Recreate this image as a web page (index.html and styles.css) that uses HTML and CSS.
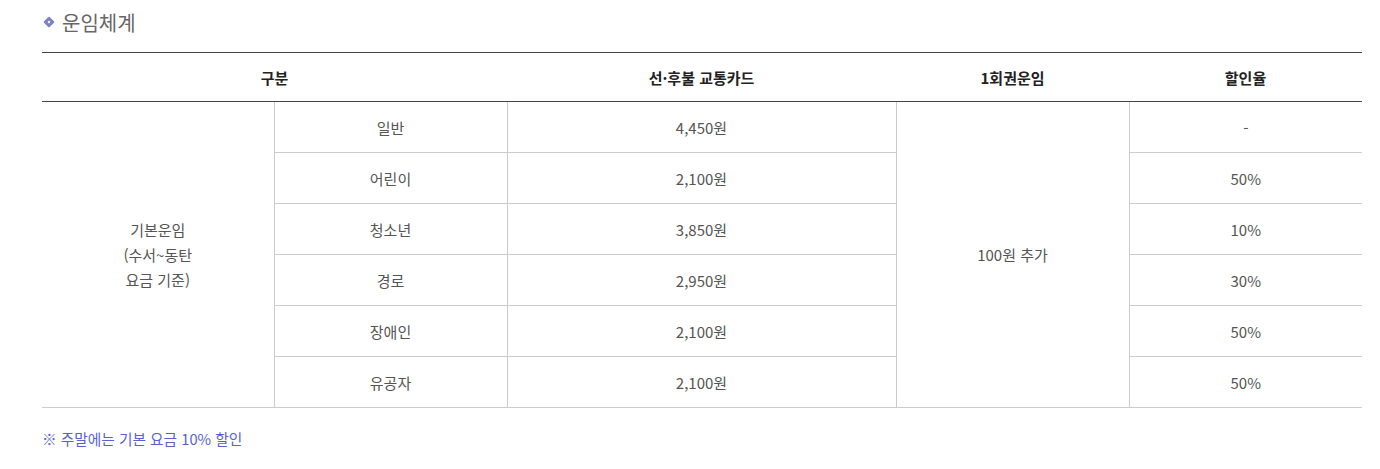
FILE: index.html
```html
<!DOCTYPE html>
<html lang="ko">
<head>
<meta charset="utf-8">
<link rel="stylesheet" href="styles.css">
</head>
<body>
<div class="wrap">
  <h3 class="title"><span class="dia"></span>운임체계</h3>
  <table class="fare">
    <colgroup>
      <col class="c1"><col class="c2"><col class="c3"><col class="c4"><col class="c5">
    </colgroup>
    <thead>
      <tr><th colspan="2">구분</th><th>선·후불 교통카드</th><th>1회권운임</th><th>할인율</th></tr>
    </thead>
    <tbody>
      <tr><td rowspan="6" class="multi">기본운임<br>(수서~동탄<br>요금 기준)</td><td>일반</td><td>4,450원</td><td rowspan="6">100원 추가</td><td>-</td></tr>
      <tr><td>어린이</td><td>2,100원</td><td>50%</td></tr>
      <tr><td>청소년</td><td>3,850원</td><td>10%</td></tr>
      <tr><td>경로</td><td>2,950원</td><td>30%</td></tr>
      <tr><td>장애인</td><td>2,100원</td><td>50%</td></tr>
      <tr><td>유공자</td><td>2,100원</td><td>50%</td></tr>
    </tbody>
  </table>
  <p class="note">※ 주말에는 기본 요금 10% 할인</p>
</div>
</body>
</html>
```
FILE: styles.css
```css
html, body { margin: 0; padding: 0; background: #fff; }
body { font-family: "Noto Sans CJK KR", "Noto Sans", sans-serif; color: #555; }
.wrap { padding: 8px 18px 0 42px; }
.title {
  margin: 0; height: 28px; display: flex; align-items: center;
  font-size: 20px; font-weight: 400; color: #666; letter-spacing: 0;
}
.dia {
  box-sizing: content-box; width: 2px; height: 2px;
  background: #fff; border: 3px solid #7c84c4; border-radius: 1px;
  transform: rotate(45deg); margin: 0 9px 0 3px;
}
.fare {
  margin-top: 16px; width: 1320px; border-collapse: collapse; table-layout: fixed;
  border-top: 1px solid #444; border-bottom: 1px solid #ccc;
}
.c1 { width: 232px; } .c2 { width: 233px; } .c3 { width: 389px; } .c4 { width: 233px; } .c5 { width: 233px; }
.fare th {
  height: 48px; font-size: 15px; font-weight: 700; color: #222; padding: 0;
  border-bottom: 1px solid #444; text-align: center;
}
.fare td {
  height: 50px; font-size: 15px; text-align: center; padding: 0;
  border: 1px solid #ccc; color: #555;
}
.fare td:first-child { border-left: none; }
.fare tr td:last-child { border-right: none; }
.fare tbody tr:first-child td { border-top: none; }
.fare td.multi { line-height: 25px; }
.note { margin: 20px 0 0; font-size: 14.7px; color: #5a5fd8; }
```
